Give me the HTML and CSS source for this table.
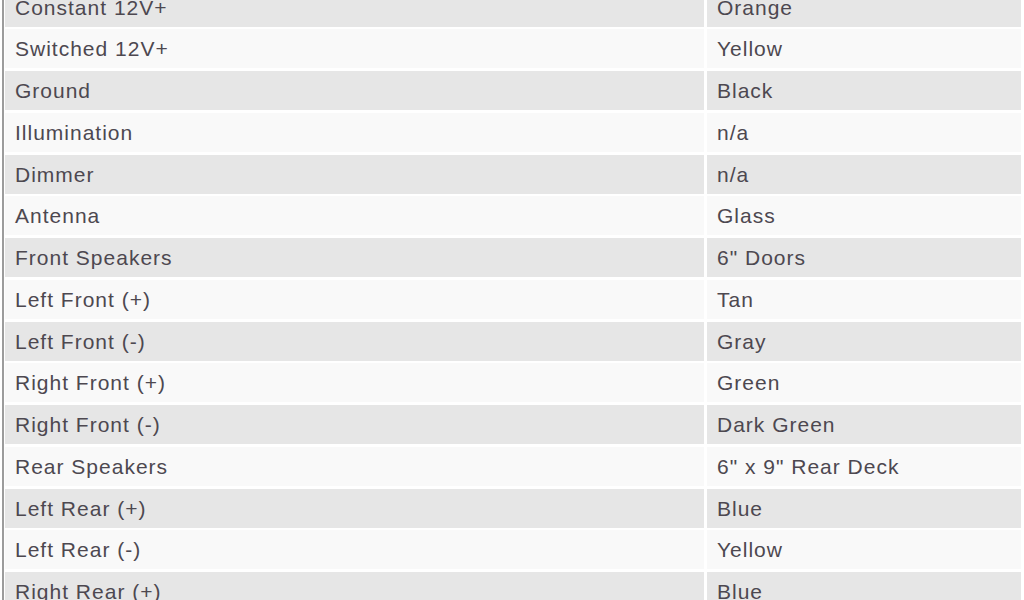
FILE: index.html
```html
<!DOCTYPE html>
<html>
<head>
<meta charset="utf-8">
<link rel="stylesheet" href="styles.css">
</head>
<body>
<div class="sheet">
  <div class="table">
    <div class="row odd"><div class="cell">Constant 12V+</div><div class="cell">Orange</div></div>
    <div class="row even"><div class="cell">Switched 12V+</div><div class="cell">Yellow</div></div>
    <div class="row odd"><div class="cell">Ground</div><div class="cell">Black</div></div>
    <div class="row even"><div class="cell">Illumination</div><div class="cell">n/a</div></div>
    <div class="row odd"><div class="cell">Dimmer</div><div class="cell">n/a</div></div>
    <div class="row even"><div class="cell">Antenna</div><div class="cell">Glass</div></div>
    <div class="row odd"><div class="cell">Front Speakers</div><div class="cell">6" Doors</div></div>
    <div class="row even"><div class="cell">Left Front (+)</div><div class="cell">Tan</div></div>
    <div class="row odd"><div class="cell">Left Front (-)</div><div class="cell">Gray</div></div>
    <div class="row even"><div class="cell">Right Front (+)</div><div class="cell">Green</div></div>
    <div class="row odd"><div class="cell">Right Front (-)</div><div class="cell">Dark Green</div></div>
    <div class="row even"><div class="cell">Rear Speakers</div><div class="cell">6" x 9" Rear Deck</div></div>
    <div class="row odd"><div class="cell">Left Rear (+)</div><div class="cell">Blue</div></div>
    <div class="row even"><div class="cell">Left Rear (-)</div><div class="cell">Yellow</div></div>
    <div class="row odd"><div class="cell">Right Rear (+)</div><div class="cell">Blue</div></div>
  </div>
</div>
</body>
</html>
```

FILE: styles.css
```css
html, body {
  margin: 0;
  padding: 0;
  background: #ffffff;
  overflow: hidden;
}
.sheet {
  margin-left: 2px;
  border-left: 2px solid #9c9c9c;
  padding-left: 1px;
  height: 600px;
  overflow: hidden;
}
.table {
  margin-top: -12.5px;
  display: flex;
  flex-direction: column;
  gap: 2.75px;
  font-family: "Liberation Sans", Arial, sans-serif;
  font-size: 21px;
  letter-spacing: 1px;
  color: #4d4850;
}
.row {
  display: grid;
  grid-template-columns: 699px 314px;
  column-gap: 3px;
  height: 39px;
}
.cell {
  padding: 1px 0 0 10px;
  line-height: 38px;
  white-space: nowrap;
}
.odd .cell {
  background: #e6e6e6;
}
.even .cell {
  background: #f9f9f9;
}
```
